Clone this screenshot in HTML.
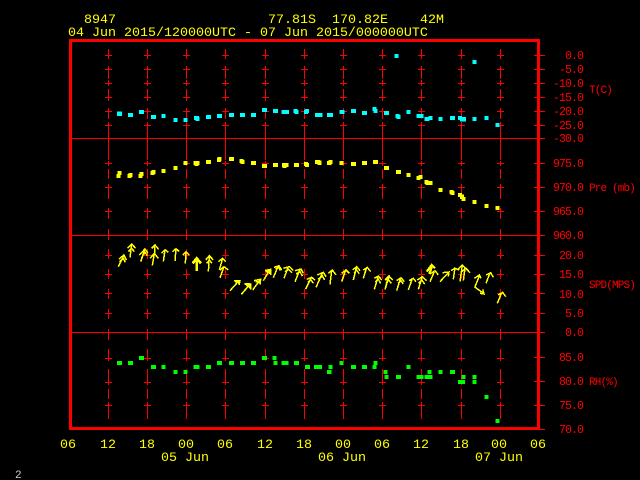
<!DOCTYPE html>
<html><head><meta charset="utf-8"><title>8947</title>
<style>
html,body{margin:0;padding:0;background:#000;width:640px;height:480px;overflow:hidden}
svg{display:block}
text{font-family:"Liberation Mono",monospace}
.y{fill:#ff0;font-size:13.33px}
.b{fill:#ff0;font-size:13.33px;text-anchor:middle}
.r{fill:#f00;font-size:11.5px;letter-spacing:-.9px;text-anchor:end}
.s{fill:#f00;font-size:11px;letter-spacing:-.85px}
</style></head><body>
<svg width="640" height="480" viewBox="0 0 640 480" xmlns="http://www.w3.org/2000/svg" shape-rendering="crispEdges">
<defs>
<path id="g" fill="none" stroke="#f00" stroke-width="1" d="M.5 49V59M.5 66V79M.5 80V86M.5 89V101M.5 108V119M.5 122V138M-3 55.5h7M-3 69.5h7M-3 83.5h7M-3 97.5h7M-3 111.5h7M-3 125.5h7
M.5 138V149M.5 149V160M.5 161V166M.5 169V179M.5 184V199M.5 208V219M.5 229V240M-3 163.5h7M-3 187.5h7M-3 211.5h7
M.5 249V259M.5 269V279M.5 289V299M.5 309V319M.5 329V340M-3 255.5h7M-3 274.5h7M-3 293.5h7M-3 313.5h7
M.5 349V361M.5 369V385M.5 389V399M.5 402V419M-3 358.5h7M-3 382.5h7M-3 405.5h7"/>
</defs>
<use href="#g" x="108"/><use href="#g" x="147"/><use href="#g" x="186"/><use href="#g" x="225"/><use href="#g" x="265"/><use href="#g" x="304"/><use href="#g" x="343"/><use href="#g" x="382"/><use href="#g" x="421"/><use href="#g" x="461"/><use href="#g" x="500"/>
<path fill="none" stroke="#f00" stroke-width="1" d="M72 138.5H545M72 235.5H545M72 332.5H545M534 55.5h11M534 69.5h11M534 83.5h11M534 97.5h11M534 111.5h11M534 125.5h11M534 163.5h11M534 187.5h11M534 211.5h11M534 255.5h11M534 274.5h11M534 293.5h11M534 313.5h11M534 357.5h11M534 381.5h11M534 405.5h11M534 429.5h11"/>
<rect x="70.5" y="40.5" width="468" height="388" fill="none" stroke="#f00" stroke-width="3"/>

<!-- cyan points -->
<g fill="none" stroke="#0ff" stroke-width="13">
<path transform="scale(.33333) translate(-7.5 0)" d="M358 341h15M391 345h15M424 336h15M460 351h15M492 348h12M528 360h12M558 360h12M589 354h15M594 357h12M625 351h15M658 348h15M694 345h15M727 345h15M760 345h15M793 330h15M826 333h15M852 336h15M860 336h15M888 333h12M891 336h12M920 336h12M923 333h12M952 345h15"/>
<path transform="translate(320 0) scale(.33333) translate(-7.5 0)" d="M0 345h15M28 345h15M34 345h12M66 336h15M100 333h15M133 339h15M165 327h12M168 333h12M199 339h15M234 348h12M237 351h12M267 336h12M297 348h15M303 348h15M321 357h15M333 354h12M363 357h12M397 354h15M421 354h12M427 358h15M433 358h12M465 357h12M501 354h12M534 375h12M231 168h12M465 186h12"/>
</g>
<!-- yellow points -->
<g fill="none" stroke="#ff0" stroke-width="13">
<path transform="translate(60 130) scale(.33333) translate(-7.5 0)" d="M177 138h12M180 129h12M210 138h12M213 135h12M243 138h12M246 132h12M279 129h12M282 126h12M312 123h12M348 114h12M378 99h12M408 99h15M411 102h12M414 99h12M445 96h15M478 90h12M480 87h12M514 87h15M546 93h12M549 96h12M580 99h15M613 108h15M646 105h15M673 105h15M675 108h12M681 105h12M709 105h15M740 102h12M743 105h12M772 96h15M780 99h12M808 99h12"/>
<path transform="translate(320 130) scale(.33333) translate(-7.5 0)" d="M0 98h12M30 99h12M33 96h12M66 99h12M100 102h15M133 99h15M166 96h15M199 114h15M235 126h15M267 135h12M297 144h12M303 141h12M321 156h12M324 159h12M333 159h12M363 180h12M396 186h12M399 189h12M421 195h12M427 200h12M432 207h12M465 216h12M501 228h12M534 234h12"/>
</g>
<!-- green points -->
<g fill="none" stroke="#0f0" stroke-width="13">
<path transform="translate(60 340) scale(.33333) translate(-7.5 0)" d="M178 69h15M211 69h15M244 54h15M280 81h15M312 81h12M348 96h12M378 96h12M408 81h15M414 81h12M445 81h15M478 69h15M514 69h15M547 69h15M580 69h15M613 54h15M645 54h12M648 69h12M672 69h15M681 69h12M709 69h15M742 81h15M770 81h15M781 81h12M808 96h12"/>
<path transform="translate(320 340) scale(.33333) translate(-7.5 0)" d="M0 81h12M33 81h12M30 96h12M66 69h12M100 81h15M133 81h15M165 81h12M168 69h12M198 96h12M201 111h12M235 111h15M267 81h12M297 111h15M303 111h15M321 111h15M333 111h12M330 96h12M363 96h12M397 96h15M421 126h15M430 126h12M432 111h12M465 111h12M465 126h12M501 171h12M534 243h12"/>
</g>
<!-- wind arrows -->
<g fill="none" stroke="#ff0" stroke-width="4.5">
<path transform="translate(100 235) scale(.33333)" d="M55 95L72 60M57 72L72 60L79 75M60 85L68 68M58 80L70 70L76 82
M90 68L95 27M82 40L95 27L107 40M85 50L95 40L103 50
M122 80L135 42M118 60L135 42L144 55M125 68L135 52L142 62
M157 92L163 55M150 70L163 55L175 70M165 55L163 30M155 40L165 30L176 43
M190 80L195 44M184 55L195 44L205 52
M225 78L228 41M217 50L228 41L238 50
M256 85L258 50M248 60L258 50L268 60
M325 110L328 62M317 75L328 62L340 75M320 85L328 75L336 85
M358 105L368 70M355 80L368 70L377 80M360 128L372 95M360 105L372 95L385 105"/>
<path transform="translate(100 235) scale(.33333)" stroke-width="8" d="M290 108L290 68M278 85L290 70L303 85"/>
<path transform="translate(100 235) scale(.33333)" d="M390 167L417 137M402 137L420 137L417 150M405 141H417V147M424 178L450 147M434 147L450 147L450 160M438 151H447V157"/>
<path transform="translate(240 250) scale(.33333)" d="M4 133L30 103M14 103L32 103L32 118M18 106H29V113
M38 120L60 90M42 92L62 88L60 103M46 95H58V100
M70 92L90 58M75 62L92 58L93 75M78 66L90 62L90 72
M100 83L115 47M102 52L117 47L125 60M106 56L116 52L121 62
M132 85L145 50M130 55L148 50L160 62M135 65L146 58L156 68
M165 95L180 58M165 62L183 57L190 70M168 72L180 65L187 78
M197 117L213 85M200 88L215 82L225 90M203 97L213 90L220 100
M228 112L247 70M232 75L250 67L258 80M234 88L247 78L254 90
M270 103L275 62M265 70L277 60L288 75
M305 95L317 60M305 70L318 60L328 70
M340 90L350 50M338 60L350 50L360 62M342 70L350 60L358 72
M370 85L380 52M370 60L382 52L392 65
M403 118L415 78M403 85L415 78L425 90M406 96L415 88L422 100
M435 118L447 80M435 90L447 80L450 85"/>
<path transform="translate(380 250) scale(.33333)" d="M15 118L25 80M15 90L27 78L38 90M18 100L26 90L34 100
M50 122L62 83M50 92L63 83L73 95M54 100L63 92L70 102
M85 120L97 85M87 92L100 85L108 95
M115 118L127 80M112 90L127 80L140 92M116 100L125 90L134 102
M150 95L163 65M150 72L165 62L175 75
M180 95L205 68M187 68L207 66L205 80
M220 88L225 52M213 62L225 55L238 60
M240 95L247 45M232 60L247 45L262 60
M250 92L255 55M245 65L258 55L270 68
M285 110L298 78M283 85L298 75L303 85
M283 110L310 130M300 130L312 132L308 118
M318 100L330 68M318 75L332 68L340 82
M352 160L365 128M355 135L368 127L377 140"/>
<path transform="translate(380 250) scale(.33333)" stroke-width="7" d="M148 72L157 45M140 65L155 45L165 55"/>
</g>

<!-- header -->
<text class="y" x="84" y="23">8947</text>
<text class="y" x="268" y="23">77.81S</text>
<text class="y" x="332" y="23">170.82E</text>
<text class="y" x="420" y="23">42M</text>
<text class="y" x="68" y="36">04 Jun 2015/120000UTC - 07 Jun 2015/000000UTC</text>

<!-- right axis -->
<text class="r" x="583" y="59">0.0</text>
<text class="r" x="583" y="73">-5.0</text>
<text class="r" x="583" y="87">-10.0</text>
<text class="r" x="583" y="101">-15.0</text>
<text class="r" x="583" y="115">-20.0</text>
<text class="r" x="583" y="129">-25.0</text>
<text class="r" x="583" y="142">-30.0</text>
<text class="r" x="583" y="167">975.0</text>
<text class="r" x="583" y="191">970.0</text>
<text class="r" x="583" y="215">965.0</text>
<text class="r" x="583" y="239">960.0</text>
<text class="r" x="583" y="259">20.0</text>
<text class="r" x="583" y="278">15.0</text>
<text class="r" x="583" y="298">10.0</text>
<text class="r" x="583" y="317">5.0</text>
<text class="r" x="583" y="336">0.0</text>
<text class="r" x="583" y="361">85.0</text>
<text class="r" x="583" y="385">80.0</text>
<text class="r" x="583" y="409">75.0</text>
<text class="r" x="583" y="433">70.0</text>
<text class="s" x="589" y="93">T(C)</text>
<text class="s" x="589" y="191">Pre (mb)</text>
<text class="s" x="589" y="288">SPD(MPS)</text>
<text class="s" x="589" y="385">RH(%)</text>

<!-- bottom axis -->
<text class="b" x="68" y="448">06</text>
<text class="b" x="108" y="448">12</text>
<text class="b" x="147" y="448">18</text>
<text class="b" x="186" y="448">00</text>
<text class="b" x="225" y="448">06</text>
<text class="b" x="265" y="448">12</text>
<text class="b" x="304" y="448">18</text>
<text class="b" x="343" y="448">00</text>
<text class="b" x="382" y="448">06</text>
<text class="b" x="421" y="448">12</text>
<text class="b" x="461" y="448">18</text>
<text class="b" x="499" y="448">00</text>
<text class="b" x="538" y="448">06</text>
<text class="y" x="161" y="461">05 Jun</text>
<text class="y" x="318" y="461">06 Jun</text>
<text class="y" x="475" y="461">07 Jun</text>
<text x="15" y="478" fill="#ccc" style="font-size:11px">2</text>
</svg>
</body></html>
